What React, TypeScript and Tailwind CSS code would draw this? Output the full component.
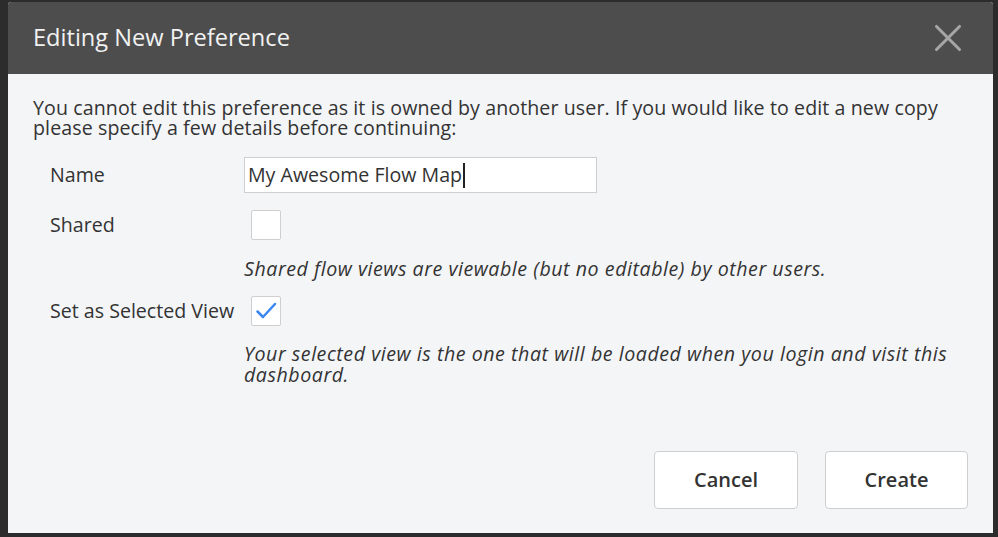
import { X } from "lucide-react";

function Check() {
  return (
    <svg viewBox="0 0 24 24" className="h-[24px] w-[24px]" fill="none" stroke="#3b86f0" strokeWidth={2.5} strokeLinecap="round" strokeLinejoin="round">
      <path d="M3.5 12.5l5.5 5.5L21 5" />
    </svg>
  );
}

export default function App() {
  return (
    <div className="h-[537px] w-[998px] overflow-hidden bg-[#2c2c2c] pl-[8px] pt-[2px] font-['Open_Sans',sans-serif]">
      <div className="flex h-[531px] w-[985px] flex-col overflow-hidden rounded-t-[3px] bg-[#f4f5f7]">
        <div className="flex h-[72px] shrink-0 items-center justify-between bg-[#4d4d4d] pl-[25px] pr-[22px]">
          <h1 className="text-[23.6px] font-normal text-[#f2f2f2]">Editing New Preference</h1>
          <X size={46} strokeWidth={1.6} className="text-[#a6a6a6]" />
        </div>

        <div className="flex flex-1 flex-col pl-[25px] pr-[25px] pt-[24px] text-[19.6px] text-[#333]">
          <p className="leading-[20px] tracking-[0.1px]">
            You cannot edit this preference as it is owned by another user. If you would like to edit a new copy please specify a few details before continuing:
          </p>

          <div className="mt-[19px] grid grid-cols-[194px_1fr] items-center pl-[17px]">
            <label>Name</label>
            <div className="flex h-[36px] w-[353px] items-center border border-[#cfcfcf] bg-white pl-[3px]">
              <span>My Awesome Flow Map</span>
              <span className="ml-[1px] h-[25px] w-[1.5px] bg-[#222]" />
            </div>

            <label className="mt-[17px]">Shared</label>
            <div className="mt-[17px] pl-[7px]">
              <div className="h-[30px] w-[30px] rounded-[2px] border border-[#cfcfcf] bg-white" />
            </div>
            <div />
            <p className="mt-[18px] italic leading-[22px] tracking-[0.55px]">Shared flow views are viewable (but no editable) by other users.</p>

            <label className="mt-[16px]">Set as Selected View</label>
            <div className="mt-[16px] pl-[7px]">
              <div className="flex h-[30px] w-[30px] items-center justify-center rounded-[2px] border border-[#cfcfcf] bg-white">
                <Check />
              </div>
            </div>
            <div />
            <p className="mt-[17px] italic leading-[21px] tracking-[0.55px]">
              Your selected view is the one that will be loaded when you login and visit this dashboard.
            </p>
          </div>

          <div className="mt-auto mb-[24px] flex justify-end gap-[27px]">
            <button className="h-[58px] w-[144px] rounded-[4px] border border-[#cfcfcf] bg-white text-[20px] font-semibold text-[#333]">Cancel</button>
            <button className="h-[58px] w-[143px] rounded-[4px] border border-[#cfcfcf] bg-white text-[20px] font-semibold text-[#333]">Create</button>
          </div>
        </div>
      </div>
    </div>
  );
}
